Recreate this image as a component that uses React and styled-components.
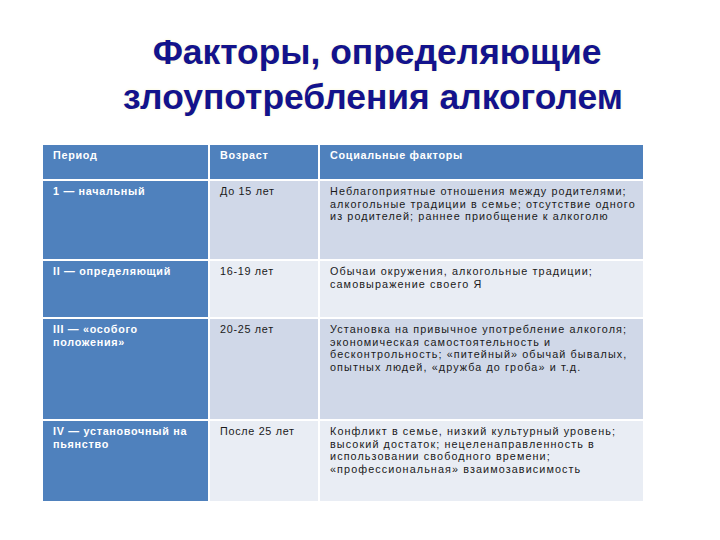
import React from "react";
import styled, { createGlobalStyle } from "styled-components";

const GlobalStyle = createGlobalStyle`
  html, body { margin: 0; padding: 0; background: #fff; }
  body { font-family: "Liberation Sans", Arial, sans-serif; }
`;

const Page = styled.div`
  width: 720px; height: 540px; box-sizing: border-box;
  padding-top: 30px; overflow: hidden;
`;

const Title = styled.h1`
  margin: 0 0 25px; padding-left: 26px;
  text-align: center;
  font-family: "Liberation Sans", Arial, sans-serif;
  font-weight: 700; font-size: 35.4px; line-height: 45px;
  color: #13138c;
  text-shadow: 0 0 3px rgba(250, 245, 190, 0.7);
`;

const Line = styled.span`
  display: block;
  padding-left: ${(p) => p.$shift || 0}px;
`;

const Table = styled.div`
  margin-left: 43px; width: 600px;
  display: grid;
  grid-template-columns: 165px 108px 323px;
  grid-template-rows: 34px 78px 56px 100px 80px;
  gap: 2px;
  background: #fff;
`;

const colors = {
  head: "#4f81bd",
  first: "#4f81bd",
  odd: "#d0d8e8",
  even: "#e9edf4",
};

const isBlue = (p) => p.$kind === "head" || p.$kind === "first";

const Cell = styled.div`
  box-sizing: border-box;
  padding: 4px 10px 0;
  background: ${(p) => colors[p.$kind]};
  color: ${(p) => (isBlue(p) ? "#fff" : "#1a1a1a")};
  font-weight: ${(p) => (isBlue(p) ? 700 : 400)};
  font-size: 10.8px;
  line-height: 12.5px;
  letter-spacing: ${(p) => (p.$wide ? 1.1 : 0.7)}px;
  white-space: nowrap;
`;

const rows = [
  {
    period: ["1 — начальный"],
    age: "До 15 лет",
    factors: [
      "Неблагоприятные отношения между родителями;",
      "алкогольные традиции в семье; отсутствие одного",
      "из родителей; раннее приобщение к алкоголю",
    ],
  },
  {
    period: ["II — определяющий"],
    age: "16-19 лет",
    factors: [
      "Обычаи окружения, алкогольные традиции;",
      "самовыражение своего Я",
    ],
  },
  {
    period: ["III — «особого", "положения»"],
    age: "20-25 лет",
    factors: [
      "Установка на привычное употребление алкоголя;",
      "экономическая самостоятельность и",
      "бесконтрольность; «питейный» обычай бывалых,",
      "опытных людей, «дружба до гроба» и т.д.",
    ],
  },
  {
    period: ["IV — установочный на", "пьянство"],
    age: "После 25 лет",
    factors: [
      "Конфликт в семье, низкий культурный уровень;",
      "высокий достаток; нецеленаправленность в",
      "использовании свободного времени;",
      "«профессиональная» взаимозависимость",
    ],
  },
];

const Lines = ({ items }) =>
  items.map((t, i) => (
    <React.Fragment key={i}>
      {i > 0 && <br />}
      {t}
    </React.Fragment>
  ));

export default function App() {
  return (
    <Page>
      <GlobalStyle />
      <Title>
        <Line $shift={8}>Факторы, определяющие</Line>
        <Line>злоупотребления алкоголем</Line>
      </Title>
      <Table>
        <Cell $kind="head">Период</Cell>
        <Cell $kind="head">Возраст</Cell>
        <Cell $kind="head">Социальные факторы</Cell>
        {rows.map((r, i) => {
          const kind = i % 2 === 0 ? "odd" : "even";
          return (
            <React.Fragment key={i}>
              <Cell $kind="first">
                <Lines items={r.period} />
              </Cell>
              <Cell $kind={kind}>{r.age}</Cell>
              <Cell $kind={kind} $wide>
                <Lines items={r.factors} />
              </Cell>
            </React.Fragment>
          );
        })}
      </Table>
    </Page>
  );
}
